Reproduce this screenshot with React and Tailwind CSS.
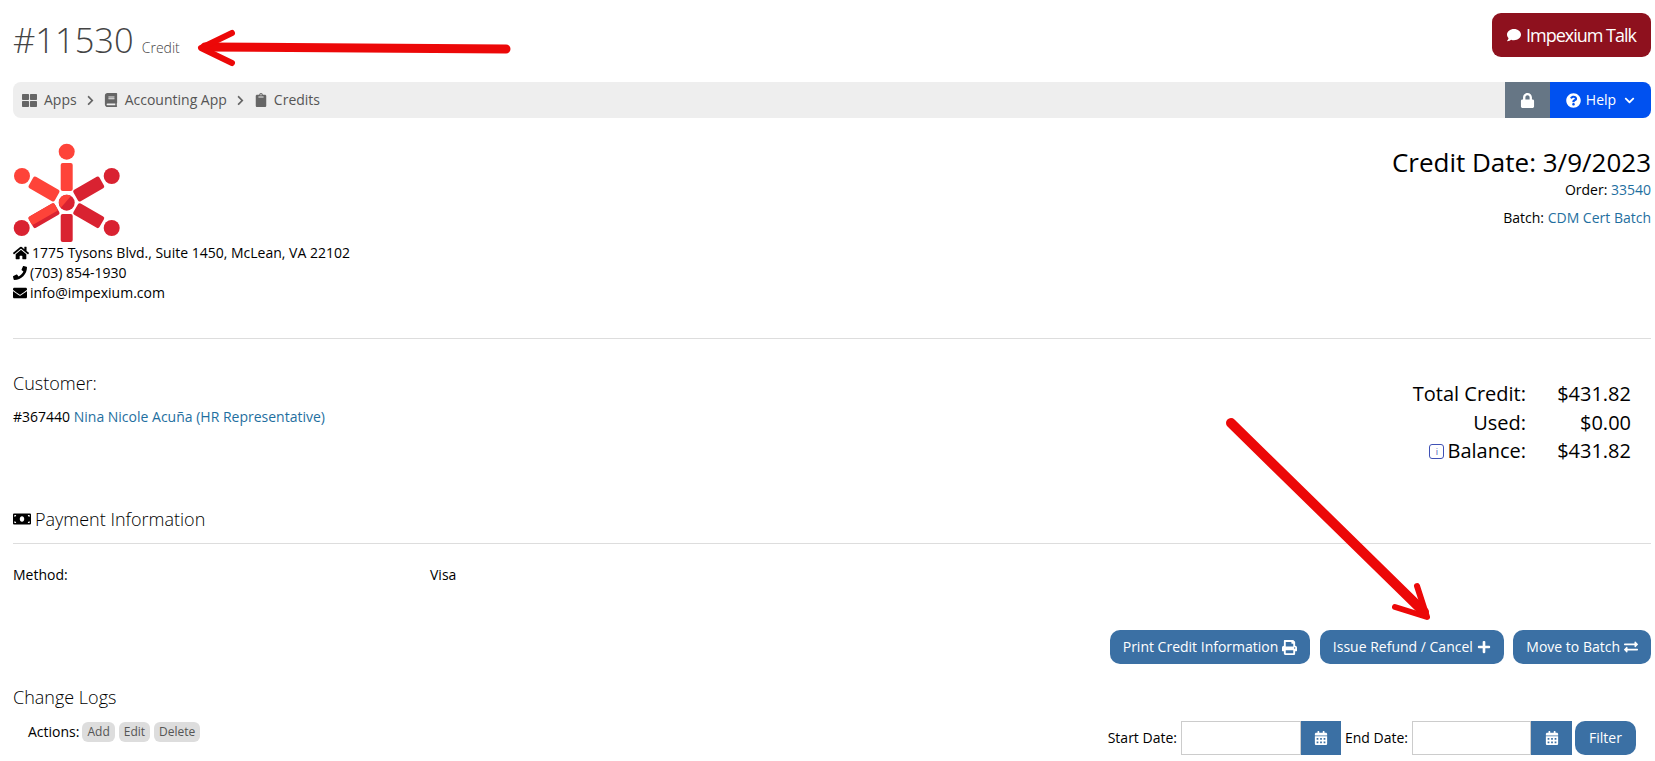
import {
  FaThLarge, FaBook, FaClipboard, FaChevronRight, FaChevronDown, FaLock, FaQuestionCircle,
  FaComment, FaHome, FaPhone, FaEnvelope, FaMoneyBill, FaPrint, FaPlus, FaExchangeAlt, FaCalendarAlt,
} from "react-icons/fa";

const LIGHT = "#fe4339";
const DARK = "#d92231";

function Logo() {
  return (
    <svg viewBox="0 0 107 100" className="block w-[107px] h-[100px]">
      <circle cx="53.7" cy="8.7" r="8" fill={LIGHT} />
      <circle cx="9" cy="33" r="8" fill={LIGHT} />
      <circle cx="98.7" cy="33" r="8" fill={DARK} />
      <circle cx="8.7" cy="85" r="8" fill={DARK} />
      <circle cx="98.7" cy="85" r="8" fill={DARK} />
      <rect x="47.7" y="20" width="12" height="28" rx="2" fill={LIGHT} />
      <rect x="47.7" y="71" width="12" height="28" rx="2" fill={DARK} />
      <rect x="16" y="39.5" width="30" height="13" rx="2" fill={LIGHT} transform="rotate(30 31 46)" />
      <rect x="60.7" y="39.5" width="30" height="13" rx="2" fill={DARK} transform="rotate(-30 75.7 46)" />
      <rect x="16" y="66.2" width="30" height="13" rx="2" fill={DARK} transform="rotate(-30 31 72.7)" />
      <rect x="16" y="66.2" width="30" height="9" rx="2" fill={LIGHT} transform="rotate(-30 31 72.7)" />
      <rect x="60.7" y="66.2" width="30" height="13" rx="2" fill={DARK} transform="rotate(30 75.7 72.7)" />
      <circle cx="53.7" cy="59.7" r="8" fill={DARK} />
      <path d="M46.6 56 A8 8 0 0 1 58 53 L48 64.5 A8 8 0 0 1 46.6 56 Z" fill={LIGHT} />
    </svg>
  );
}

function ActionButton({ label, icon }) {
  return (
    <button className="h-[34px] px-[13px] rounded-[10px] bg-[#3b70a4] text-white text-sm flex items-center gap-[4px]">
      {label}
      {icon}
    </button>
  );
}

function DateField({ label, inputWidth, addonWidth }) {
  return (
    <div className="flex items-center">
      <span className="text-sm text-black mr-[4px]">{label}</span>
      <div className={`h-[34px] border border-[#ccc] bg-white ${inputWidth}`} />
      <div className={`h-[34px] bg-[#3b70a4] flex items-center justify-center ${addonWidth}`}>
        <FaCalendarAlt className="text-white text-[14px]" />
      </div>
    </div>
  );
}

function TotalRow({ label, value, info }) {
  return (
    <div className="flex justify-end items-center h-[28.5px]">
      {info && (
        <span className="w-[15px] h-[15px] mr-[3px] border border-[#3f51b5] rounded-[3px] text-[#3f51b5] text-[9px] leading-[13px] text-center">
          i
        </span>
      )}
      <span>{label}</span>
      <span className="w-[105px] text-right">{value}</span>
    </div>
  );
}

export default function App() {
  return (
    <div className="relative h-screen overflow-hidden bg-white pl-[13px] pr-[4px] pt-[13px] text-black font-['Open_Sans',sans-serif]">
      {/* Title */}
      <div className="flex justify-between h-[44px]">
        <div className="flex items-baseline text-[#444] font-light pt-[3px]">
          <span className="text-[34.5px] leading-[48px]">#11530</span>
          <span className="text-sm ml-[8px]">Credit</span>
        </div>
        <button className="w-[159px] h-[44px] rounded-[9px] bg-[#8e111e] text-white text-[18px] tracking-[-1px] flex items-center justify-center gap-[5px]">
          <FaComment className="text-[14px]" />
          Impexium Talk
        </button>
      </div>

      {/* Breadcrumb */}
      <div className="mt-[25px] flex h-[36px] rounded-[8px] overflow-hidden bg-[#eee] text-sm text-[#555]">
        <div className="flex-1 flex items-center pl-[9px]">
          <FaThLarge className="text-[15px] text-[#666] mr-[7px]" />
          <span>Apps</span>
          <FaChevronRight className="text-[11px] text-[#666] mx-[8px]" />
          <FaBook className="text-[14px] text-[#666] mr-[7px]" />
          <span>Accounting App</span>
          <FaChevronRight className="text-[11px] text-[#666] mx-[8px]" />
          <FaClipboard className="text-[14px] text-[#666] mr-[6px]" />
          <span>Credits</span>
        </div>
        <div className="w-[45px] bg-[#667685] flex items-center justify-center">
          <FaLock className="text-white text-[15px]" />
        </div>
        <div className="w-[101px] bg-[#0051f0] text-white flex items-center justify-center">
          <FaQuestionCircle className="text-[15px] mr-[5px]" />
          <span>Help</span>
          <FaChevronDown className="text-[11px] ml-[8px]" />
        </div>
      </div>

      {/* Company + credit date */}
      <div className="mt-[25px] flex justify-between">
        <div>
          <Logo />
          <div className="text-sm leading-5">
            <div className="flex items-center gap-[3px]"><FaHome className="text-[16px]" />1775 Tysons Blvd., Suite 1450, McLean, VA 22102</div>
            <div className="flex items-center gap-[3px]"><FaPhone className="text-[14px]" />(703) 854-1930</div>
            <div className="flex items-center gap-[3px]"><FaEnvelope className="text-[14px]" />info@impexium.com</div>
          </div>
        </div>
        <div className="pt-[3px] text-right text-sm leading-5">
          <div className="text-[26px] leading-8">Credit Date: 3/9/2023</div>
          <div className="mt-[2px]">Order: <a className="text-[#1f6fa0]">33540</a></div>
          <div className="mt-[8px]">Batch: <a className="text-[#1f6fa0]">CDM Cert Batch</a></div>
        </div>
      </div>

      <div className="mt-[35px] border-t border-[#ddd]" />

      {/* Customer + totals */}
      <div className="mt-[32px] flex justify-between h-[136px]">
        <div>
          <div className="text-lg leading-6 font-light">Customer:</div>
          <div className="mt-[12px] text-sm leading-5">#367440 <a className="text-[#1f6fa0]">Nina Nicole Acuña (HR Representative)</a></div>
        </div>
        <div className="pt-[9px] pr-[20px] text-[20px]">
          <TotalRow label="Total Credit:" value="$431.82" />
          <TotalRow label="Used:" value="$0.00" />
          <TotalRow label="Balance:" value="$431.82" info />
        </div>
      </div>

      {/* Payment */}
      <div className="flex items-center gap-[4px] pb-[12px] border-b border-[#ddd] text-lg leading-6 font-light">
        <FaMoneyBill className="text-[18px]" />
        Payment Information
      </div>
      <div className="mt-[21px] flex text-sm leading-5">
        <span className="w-[417px]">Method:</span>
        <span>Visa</span>
      </div>

      {/* Actions */}
      <div className="mt-[45px] flex justify-end gap-[9.5px]">
        <ActionButton label="Print Credit Information" icon={<FaPrint className="text-[15px]" />} />
        <ActionButton label="Issue Refund / Cancel" icon={<FaPlus className="text-[14px]" />} />
        <ActionButton label="Move to Batch" icon={<FaExchangeAlt className="text-[14px]" />} />
      </div>

      {/* Change logs */}
      <div className="mt-[21px] text-lg leading-6 font-light">Change Logs</div>
      <div className="mt-[12px] flex justify-between">
        <div className="flex items-center pl-[15px] text-sm h-[20px] mt-[1px]">
          <span className="mr-[3px]">Actions:</span>
          {["Add", "Edit", "Delete"].map((t) => (
            <span key={t} className="h-[20px] px-[5px] mr-[4px] rounded-[6px] bg-[#ddd] text-[#555] text-xs leading-5">{t}</span>
          ))}
        </div>
        <div className="flex items-center pr-[15px]">
          <DateField label="Start Date:" inputWidth="w-[120px]" addonWidth="w-[40px]" />
          <div className="w-[4px]" />
          <DateField label="End Date:" inputWidth="w-[119px]" addonWidth="w-[41px]" />
          <button className="ml-[3px] w-[61px] h-[34px] rounded-[10px] bg-[#3b70a4] text-white text-sm">Filter</button>
        </div>
      </div>

      {/* Red annotation arrows */}
      <svg viewBox="0 0 1655 761" className="absolute inset-0 w-[1655px] h-[761px] pointer-events-none" fill="none" stroke="#ec0808" strokeLinecap="round" strokeLinejoin="round">
        <path d="M506 49 L205 47" strokeWidth="9" />
        <path d="M232 33 L201 48 L232 63" strokeWidth="6" />
        <path d="M1231 423 L1424 612" strokeWidth="10" />
        <path d="M1417 586 L1427 617 L1395 607" strokeWidth="6" />
      </svg>
    </div>
  );
}
